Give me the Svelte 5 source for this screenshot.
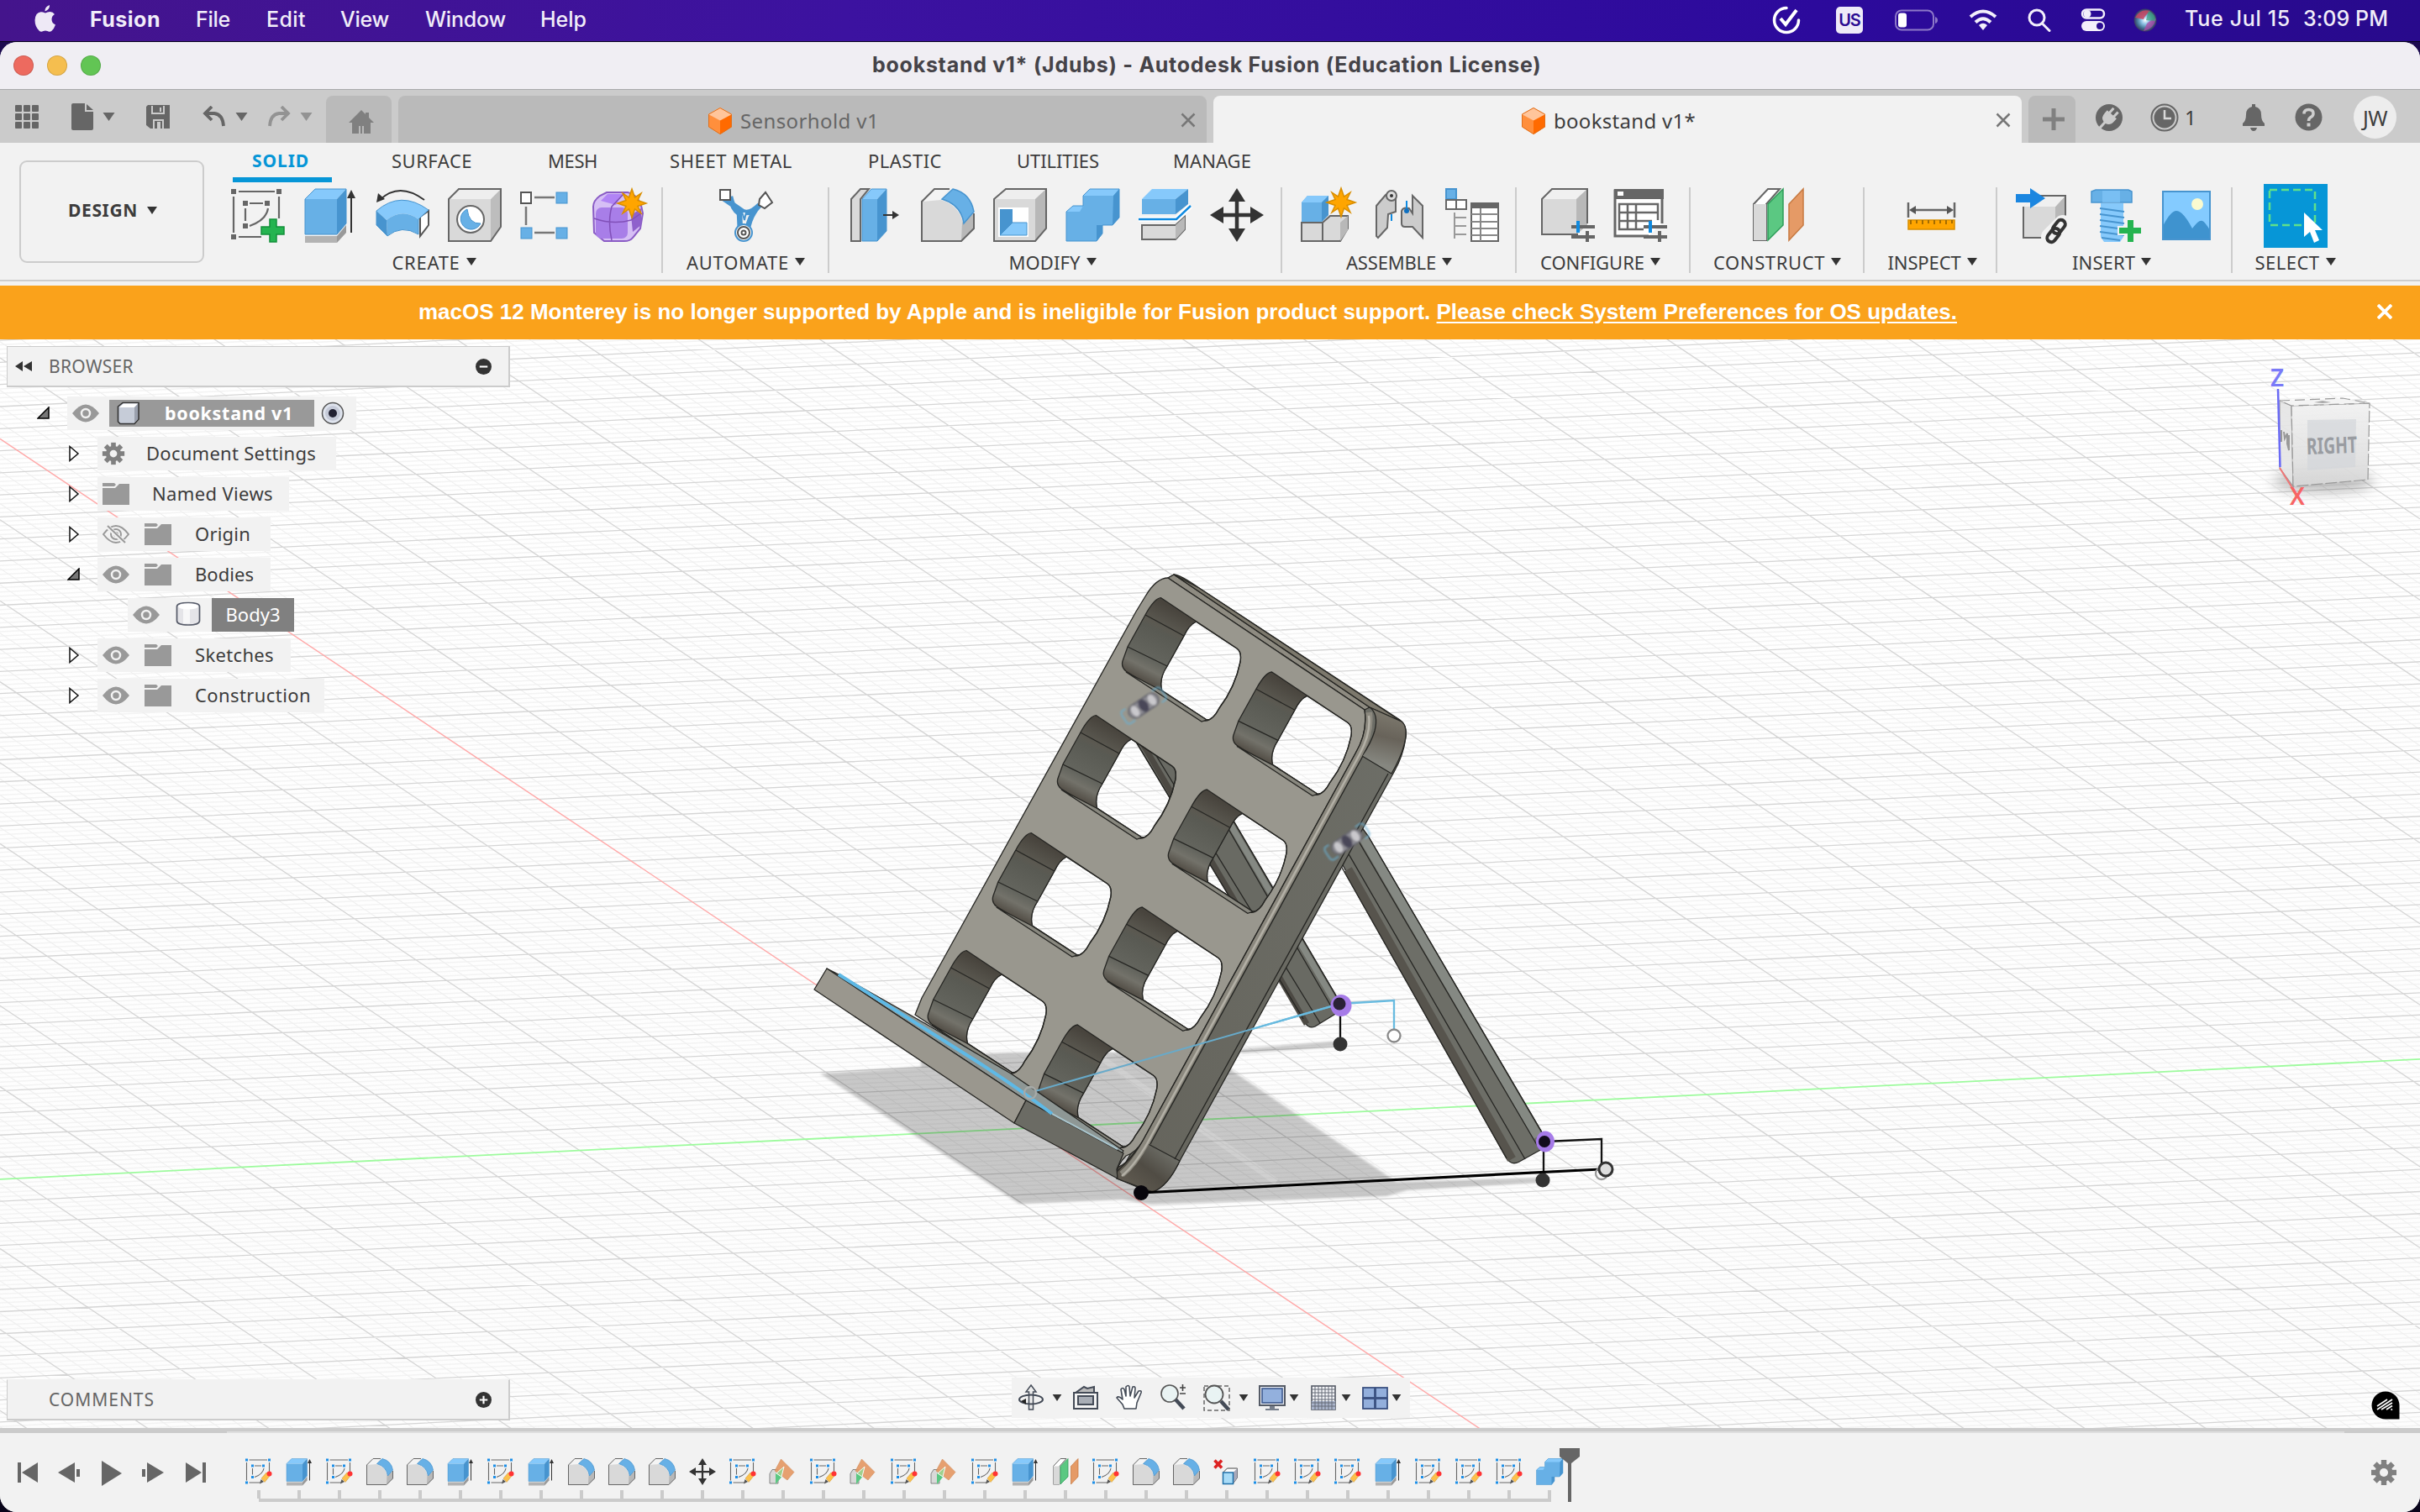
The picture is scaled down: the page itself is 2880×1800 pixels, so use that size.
<script>
  // Spreads letters so that a label fills its design width.
  function fit(node, width) {
    const natural = node.getBoundingClientRect().width;
    const count = node.textContent.trim().length;
    node.style.letterSpacing = `${(width - natural) / count}px`;
  }

  const menus = [
    { text: 'Fusion', w: 84, cell: 126, bold: true },
    { text: 'File', w: 41, cell: 84 },
    { text: 'Edit', w: 47, cell: 88 },
    { text: 'View', w: 58, cell: 101 },
    { text: 'Window', w: 96, cell: 137 },
    { text: 'Help', w: 55, cell: 80 }
  ];

  const ribbonTabs = [
    { text: 'SOLID', w: 68, cell: 166, active: true },
    { text: 'SURFACE', w: 96, cell: 186 },
    { text: 'MESH', w: 59, cell: 145 },
    { text: 'SHEET METAL', w: 146, cell: 236 },
    { text: 'PLASTIC', w: 88, cell: 177 },
    { text: 'UTILITIES', w: 98, cell: 186 },
    { text: 'MANAGE', w: 93, cell: 100 }
  ];

  const groups = [
    { text: 'CREATE', w: 81, size: 532, icons: ['sketch', 'extrude', 'revolve', 'hole', 'pattern', 'form'] },
    { text: 'AUTOMATE', w: 122, size: 198, icons: ['automate'] },
    { text: 'MODIFY', w: 85, size: 539, tight: true, icons: ['press', 'fillet', 'shell', 'combine', 'split', 'move'] },
    { text: 'ASSEMBLE', w: 107, size: 279, icons: ['component', 'joint', 'bom'] },
    { text: 'CONFIGURE', w: 124, size: 207, tight: true, icons: ['config', 'configTable'] },
    { text: 'CONSTRUCT', w: 133, size: 207, icons: ['construct'] },
    { text: 'INSPECT', w: 87, size: 158, wide: true, icons: ['inspect'] },
    { text: 'INSERT', w: 75, size: 280, tight: true, icons: ['insert', 'bolt', 'picture'] },
    { text: 'SELECT', w: 77, size: 150, icons: ['select'] }
  ];

  const tree = [
    { text: 'bookstand v1', w: 153, width: 344, indent: 80, open: true, root: true },
    { text: 'Document Settings', w: 202, width: 284, indent: 116, icon: 'gear', gap: 25 },
    { text: 'Named Views', w: 144, width: 228, indent: 116, icon: 'folder', gap: 27 },
    { text: 'Origin', w: 66, width: 206, indent: 116, eye: 'off', icon: 'folder', gap: 28 },
    { text: 'Bodies', w: 70, width: 206, indent: 116, open: true, eye: 'on', icon: 'folder', gap: 28 },
    { text: 'Body3', w: 65, width: 198, indent: 152, leaf: true, eye: 'on', icon: 'cylinder', picked: true },
    { text: 'Sketches', w: 94, width: 230, indent: 116, eye: 'on', icon: 'folder', gap: 28 },
    { text: 'Construction', w: 138, width: 270, indent: 116, eye: 'on', icon: 'folder', gap: 28 }
  ];

  const S = 'sketchEdit', E = 'extrude', F = 'fillet', P = 'plane';
  const timeline = [S, E, S, F, F, E, S, E, F, F, F, 'move', S, P, S, P, S, P, S, E, 'construct', S, F, F,
    'remove', S, S, S, E, S, S, S, 'combine'];

  // Ground grid: two families of parallel lines.
  const shallow = (y) => `M0 ${y.toFixed(2)}L2880 ${(y - 2880 * 0.04965).toFixed(2)}`;
  const steep = (y) => `M0 ${y.toFixed(2)}L2880 ${(y + 2880 * 0.6691).toFixed(2)}`;
  let major = '', minor = '', minorSteep = '';
  for (let i = -195; i < 100; i++) {
    const y = 1403.8 + i * 5.256;
    if (i === 0) continue;
    if (i % 5 === 0) major += shallow(y); else minor += shallow(y);
  }
  for (let i = -105; i < 64; i++) {
    const y = 522.4 + i * 19.28;
    if (i === 0) continue;
    if (i % 5 === 0) major += steep(y); else minorSteep += steep(y);
  }

  // Window cut-outs of the stand: four rows, two columns.
  const outline = [['M', 1381.7, 711.7], ['L', 1472, 772], ['Q', 1478, 776, 1476, 788], ['Q', 1470, 818, 1451, 843],
    ['Q', 1441, 862, 1430, 857], ['L', 1340, 799], ['Q', 1334, 794, 1336, 787], ['L', 1342, 770], ['L', 1363, 732], ['Q', 1374, 712, 1381.7, 711.7]];
  const opening = [['M', 1423.5, 740], ['L', 1472, 772], ['Q', 1478, 776, 1476, 788], ['Q', 1470, 818, 1451, 843],
    ['Q', 1444, 857, 1436, 857], ['L', 1382.7, 822], ['Q', 1379, 808, 1389, 793], ['L', 1409, 757], ['Q', 1415, 744, 1423.5, 740]];
  const shift = (shape, dx, dy) =>
    shape.map(([c, ...p]) => c + p.map((v, i) => (v + (i % 2 ? dy : dx)).toFixed(1)).join(' ')).join('') + 'Z';
  const holes = [];
  for (let r = 0; r < 4; r++) for (let c = 0; c < 2; c++) holes.push([c * 131.9 - r * 77.1, c * 88.3 + r * 140]);
  const openings = holes.map(([x, y]) => shift(opening, x, y)).join('');
  const wall = shift(outline, 0, 0) + shift(opening, 0, 0);
  const face = 'M1390 688Q1376 688 1363 710L1352 728L1097 1188L1089 1208L1333 1368L1329 1400Q1328 1388 1340 1376Q1352 1372 1360 1358L1613 897Q1628 872 1624 845Z' + openings;
</script>

{#snippet caret()}
  <svg class="caret" viewBox="0 0 12 9"><path d="M0 0H12L6 9Z" fill="currentColor" /></svg>
{/snippet}

{#snippet star(x, y)}
  <path transform="translate({x} {y})" d="M0-17L3.500-7L11-12L7-3.500L17 0L7 3.500L11 12L3.500 7L0 17L-3.500 7L-11 12L-7 3.500L-17 0L-7-3.500L-11-12L-3.500-7Z" fill="#ffa500" stroke="#d98e00" stroke-width="1.500" />
{/snippet}

{#snippet gear()}
  <svg class="gear" viewBox="-16 -16 32 32">
    {#each [0, 45, 90, 135] as a}<rect x="-3.200" y="-15" width="6.400" height="30" transform="rotate({a})" fill="#808080" />{/each}
    <circle r="10.500" fill="#808080" /><circle r="5" fill="#f2f2f2" />
  </svg>
{/snippet}

{#snippet orangeCube()}
  <svg class="cube" viewBox="0 0 28 32">
    <path d="M14 0L28 8V23L14 32L0 23V8Z" fill="#ff8f3c" /><path d="M14 15L28 8V23L14 32Z" fill="#ff6a00" />
    <path d="M14 0L28 8L14 15.500L0 8Z" fill="#ffc59b" /><path d="M14 .5L27.500 8V23L14 31.500L.5 23V8Z" fill="none" stroke="#e0701c" />
  </svg>
{/snippet}

{#snippet icon(name)}
  <svg class="icon" viewBox="0 0 64 64">
    {#if name === 'sketch' || name === 'sketchEdit'}
      {@const edit = name === 'sketchEdit'}
      <g stroke="#666" stroke-width="2.200" fill="none">
        <path d="M9 4H52M3 10V53M57 10V36M9 58H36M22 18H38M17 24V39M44 24Q42 38 22 45" />
      </g>
      <g fill={edit ? '#1c8fe8' : '#666'}>
        <rect y="1" width="6" height="6" /><rect x="54" y="1" width="6" height="6" /><rect y="55" width="6" height="6" />
        <rect x="14" y="15" width="6" height="6" /><rect x="40" y="15" width="6" height="6" /><rect x="14" y="42" width="6" height="6" />
      </g>
      {#if edit}
        <path d="M34 61L37 50L44 56Z" fill="#555" /><path d="M38 48L50 34L58 42L46 57Z" fill="#fcc04b" stroke="#c99430" /><circle cx="57" cy="37" r="6" fill="#f33" />
      {:else}
        <path d="M46 37H54V46H63V55H54V64H46V55H36V46H46Z" fill="#25b450" stroke="#12903a" stroke-width="1.500" />
      {/if}
    {:else if name === 'extrude'}
      <path d="M2 57H40V65H2Z" fill="#b3b3b3" /><path d="M40 57L51 44V53L40 65Z" fill="#999" />
      <path d="M2 13L14 1H51L40 13Z" fill="#86c9fb" /><path d="M2 13H40V55H2Z" fill="#67b0e6" /><path d="M40 13L51 1V42L40 55Z" fill="#4794cf" />
      <path d="M2 55V13L14 1H51V42L40 55Z" fill="none" stroke="#4794cf" /><path d="M57 10V53" stroke="#333" stroke-width="2" /><path d="M57 2L62 12H52Z" fill="#333" />
    {:else if name === 'revolve'}
      <path d="M5 14Q28-8 58 14" fill="none" stroke="#333" stroke-width="2" /><path d="M1 17L3 6L11 13Z" fill="#333" />
      <path d="M53 34L63 27V44L53 57Z" fill="#fff" stroke="#555" stroke-width="2" />
      <path d="M1 27Q30 2 63 26L51 37Q32 23 13 38Z" fill="#86c9fb" /><path d="M13 38Q32 23 51 37V55Q31 43 14 57Z" fill="#67b0e6" /><path d="M1 27L13 38L14 57L1 44Z" fill="#4794cf" />
      <path d="M1 27Q30 2 63 26L51 37V55Q31 43 14 57L1 44Z" fill="none" stroke="#4794cf" />
    {:else if name === 'hole'}
      <path d="M1 13L13 1H63V46L51 63H1Z" fill="#d9d9d9" /><path d="M51 13L63 1V46L51 63Z" fill="#bdbdbd" /><path d="M1 13L13 1H63L51 13Z" fill="#eee" />
      <path d="M1 13L13 1H63V46L51 63H1Z" fill="none" stroke="#666" stroke-width="2" /><circle cx="27" cy="37" r="16" fill="#fff" stroke="#666" stroke-width="2" /><path d="M23 25A12.500 12.500 0 1 0 39 42Q25 43 23 25Z" fill="#67b0e6" stroke="#4794cf" />
    {:else if name === 'pattern'}
      <path d="M17 11H41M7 22V44M17 53H41" stroke="#777" stroke-width="2.500" /><rect x="1" y="5" width="12" height="13" fill="#fff" stroke="#555" stroke-width="2" />
      <g fill="#67b0e6" stroke="#4794cf"><rect x="43" y="5" width="13" height="13" /><rect x="1" y="47" width="13" height="13" /><rect x="43" y="47" width="13" height="13" /></g>
    {:else if name === 'form'}
      <path d="M1 22Q1 15 9 9L17 5H42Q57 8 60 30L57 48L48 59Q45 63 38 63H14L2 53Z" fill="#d6bff5" stroke="#8a5cc5" stroke-width="2" />
      <path d="M10 15L18 7H36L28 20Z" fill="#b184f5" /><rect x="4" y="23" width="38" height="37" rx="7" fill="#a87ee8" /><path d="M46 32L58 24V44L48 52Z" fill="#8f61cc" /><path d="M2 36Q25 44 46 38L58 30M23 62Q18 40 23 22L38 6" fill="none" stroke="#8150b8" stroke-width="1.500" />
      {@render star(47, 18)}
    {:else if name === 'automate'}
      <path d="M5 12L28 28Q36 32 48 20M13 10Q16 25 24 30L25 52M48 20Q36 32 33 52" fill="none" stroke="#4794cf" stroke-width="6.500" /><path d="M27 28L32 28L30 38Z" fill="#fff" stroke="#4794cf" stroke-width="2" />
      <rect x="1" y="2" width="12" height="12" fill="#fff" stroke="#555" stroke-width="2" /><path d="M48 13L55 5L63 17L54 24L47 20Z" fill="#fff" stroke="#555" stroke-width="2" /><circle cx="29" cy="53" r="10" fill="#fff" stroke="#4794cf" stroke-width="2" /><circle cx="29" cy="53" r="7" fill="#fff" stroke="#555" stroke-width="2" /><circle cx="29" cy="53" r="2.500" fill="none" stroke="#555" stroke-width="2" />
    {:else if name === 'press'}
      <path d="M3 13L14 1H24L14 13V63H3Z" fill="#d9d9d9" stroke="#666" stroke-width="2" /><path d="M16 13H34V63H16Z" fill="#67b0e6" /><path d="M16 13L27 1H45L34 13Z" fill="#86c9fb" /><path d="M34 13L45 1V51L34 63Z" fill="#4794cf" /><path d="M16 13L27 1H45V51L34 63H16Z" fill="none" stroke="#4794cf" /><path d="M41 32H54" stroke="#333" stroke-width="2" /><path d="M52 27L60 32L52 37Z" fill="#333" />
    {:else if name === 'fillet'}
      <path d="M1 16L16 1H34L24 14Q44 20 50 40L63 30V48L48 63H1Z" fill="#d9d9d9" /><path d="M49 41L63 30V48L48 63Z" fill="#b8b8b8" /><path d="M2 16L16 2H33L24 14Z" fill="#f4f4f4" /><path d="M1 63V16L16 1H34M63 30V48L48 63H1V16" fill="none" stroke="#666" stroke-width="2" />
      <path d="M25 13L38 1Q59 6 63 28L51 42Q48 20 25 13Z" fill="#67b0e6" stroke="#4794cf" stroke-width="1.500" />
    {:else if name === 'shell'}
      <path d="M1 13L15 1H63V48L50 63H1Z" fill="#d9d9d9" /><path d="M1 13L15 1H63L50 13Z" fill="#eee" /><path d="M50 13L63 1V48L50 63Z" fill="#b8b8b8" /><path d="M1 13L15 1H63V48L50 63H1Z" fill="none" stroke="#666" stroke-width="2" /><path d="M6 23H42V58H6Z" fill="#fff" /><path d="M8 25H23V41L8 56Z" fill="#4794cf" /><path d="M23 41H40V56H8Z" fill="#86c9fb" stroke="#4794cf" />
    {:else if name === 'combine'}
      <path d="M1 28L9 21H21V9L29 1H64V35L56 44H44V54L37 63H1Z" fill="#67b0e6" /><path d="M21 9L29 1H64L57 9ZM1 28L9 21H21L17 28Z" fill="#86c9fb" /><path d="M57 9L64 1V35L56 44ZM37 54V44H44V54L37 63Z" fill="#4794cf" /><path d="M1 28L9 21H21V9L29 1H64V35L56 44H44V54L37 63H1Z" fill="none" stroke="#4794cf" />
    {:else if name === 'split'}
      <path d="M5 44H45L56 34V49L45 61H5Z" fill="#d9d9d9" stroke="#666" stroke-width="2" /><path d="M45 44L56 34V49L45 61Z" fill="#b8b8b8" /><path d="M5 13H45V31H5Z" fill="#67b0e6" /><path d="M5 13L17 1H60L45 13Z" fill="#86c9fb" /><path d="M45 13L60 1V19L45 31Z" fill="#4794cf" /><path d="M1 37H46L63 21" fill="none" stroke="#fff" stroke-width="6" /><path d="M1 37H46L63 21" fill="none" stroke="#0f8ae0" stroke-width="2.500" />
    {:else if name === 'move'}
      <path d="M32 8V56M8 32H56" stroke="#333" stroke-width="4.500" /><path d="M32 0L42 16H22ZM32 64L42 48H22ZM0 32L16 22V42ZM64 32L48 22V42Z" fill="#333" />
    {:else if name === 'component'}
      <path d="M1 41H26V63H1ZM26 41L35 33H56V48L47 63H26Z" fill="#d9d9d9" stroke="#666" stroke-width="2" /><path d="M47 41L56 33V50L47 63Z" fill="#b8b8b8" /><path d="M1 17L8 9H33V32L25 40H1Z" fill="#67b0e6" /><path d="M1 17L8 9H33L25 17Z" fill="#86c9fb" /><path d="M25 17L33 9V32L25 40Z" fill="#4794cf" />
      {@render star(48, 17)}
    {:else if name === 'joint'}
      <path d="M4 21L15 8Q22 2 27 9V28L18 31L17 47L6 59L4 57Z" fill="#ccc" stroke="#666" stroke-width="2" /><circle cx="22" cy="9" r="6" fill="#ddd" stroke="#666" stroke-width="2" /><circle cx="22" cy="9" r="2" fill="#333" /><path d="M22 31V39" stroke="#0f8ae0" stroke-width="2" />
      <path d="M47 9L59 21V59L47 46H38Q34 46 34 42V27Q36 22 43 24L47 30Z" fill="#ccc" stroke="#666" stroke-width="2" /><path d="M40 15V28" stroke="#0f8ae0" stroke-width="2" /><circle cx="40" cy="27" r="3" fill="#0f70c0" />
    {:else if name === 'bom'}
      <path d="M1 1H13V13H1Z" fill="#67b0e6" stroke="#4794cf" stroke-width="2" /><path d="M1 14H25V25H1ZM13 14V25" fill="#fff" stroke="#666" stroke-width="2" /><path d="M11 29V60M11 35H25M11 45H25M11 55H25" stroke="#999" stroke-width="2" /><rect x="31" y="18" width="32" height="45" fill="#fff" stroke="#666" stroke-width="2" /><path d="M30 17H64V24H30Z" fill="#666" /><path d="M31 31H63M31 40H63M31 48H63M31 56H63M42 24V63" stroke="#888" stroke-width="2" />
    {:else if name === 'config'}
      <path d="M1 13L13 1H55V44L42 55H1Z" fill="#d9d9d9" /><path d="M1 13L13 1H55L42 13Z" fill="#f0f0f0" /><path d="M42 13L55 1V44L42 55Z" fill="#b8b8b8" /><path d="M44 55H1V13L13 1H55V42" fill="none" stroke="#666" stroke-width="2" /><path d="M36 46H64M36 58H64" stroke="#666" stroke-width="4" /><path d="M44 39V53" stroke="#0f8ae0" stroke-width="4" /><path d="M55 51V64" stroke="#666" stroke-width="4" />
    {:else if name === 'configTable'}
      <path d="M42 57H2V3H58V42" fill="#fff" stroke="#666" stroke-width="3" /><path d="M1 1H60V13H1Z" fill="#666" /><rect x="5" y="4" width="7" height="5" fill="#fff" /><path d="M36 49H7V19H53V38M7 29H53M7 39H46M17 19V49M27 19V49" fill="none" stroke="#666" stroke-width="2.500" /><path d="M36 46H64M36 58H64" stroke="#666" stroke-width="4" /><path d="M44 39V53" stroke="#0f8ae0" stroke-width="4" /><path d="M55 51V64" stroke="#666" stroke-width="4" />
    {:else if name === 'construct'}
      <path d="M3 19L20 1H34L18 19V62H3Z" fill="#fff" stroke="#666" stroke-width="2" /><path d="M3 19H18V62H3Z" fill="#d9d9d9" /><path d="M20 19L38 1V44L20 62Z" fill="#5bc882" stroke="#2d9c58" stroke-width="1.500" /><path d="M45 19L62 1V44L45 62Z" fill="#e59a66" stroke="#c77a42" stroke-width="1.500" />
    {:else if name === 'inspect'}
      <path d="M5 17V35M60 17V35M10 26H55" stroke="#666" stroke-width="2.500" /><path d="M6 26L14 21V31ZM59 26L51 21V31Z" fill="#555" /><rect x="5" y="38" width="55" height="11" fill="#ffa500" stroke="#d98e00" stroke-width="1.500" /><path d="M8 38V43M15 38V42M22 38V43M29 38V42M36 38V43M43 38V42M50 38V43M57 38V42" stroke="#875a00" stroke-width="1.500" />
    {:else if name === 'insert'}
      <path d="M9 22L22 9H59L47 22V59H9Z" fill="#d9d9d9" /><path d="M47 22L59 9V48L47 59Z" fill="#b8b8b8" /><path d="M9 22L22 9H59L47 22Z" fill="#f0f0f0" /><path d="M32 59H9V22M22 9H59V34" fill="none" stroke="#666" stroke-width="2" /><path d="M0 7H17V0L35 12L17 24V17H0Z" fill="#1b86e0" />
      <path d="M41 58L56 43" fill="none" stroke="#f2f2f2" stroke-width="22" stroke-linecap="round" />
      <g transform="rotate(38 48 51)" fill="none" stroke="#333" stroke-width="4"><rect x="42.500" y="36" width="10" height="18" rx="5" /><rect x="43.500" y="48" width="10" height="18" rx="5" /></g>
    {:else if name === 'bolt'}
      <path d="M15 18H42V58L38 64H19L15 58Z" fill="#86c9fb" /><path d="M14 24L43 28M14 31L43 35M14 38L43 42M14 45L43 49M14 52L43 56M16 59L38 62" stroke="#4794cf" stroke-width="2" /><path d="M4 4L9 2H48L52 4V17H4Z" fill="#67b0e6" stroke="#4794cf" stroke-width="1.500" /><path d="M17 3H38V17H17Z" fill="#86c9fb" opacity=".6" /><path d="M46 37H55V46H64V55H55V65H46V55H36V46H46Z" fill="#25b450" stroke="#f2f2f2" stroke-width="2" />
    {:else if name === 'picture'}
      <rect x="2" y="4" width="57" height="57" fill="#84cbff" /><circle cx="44" cy="19" r="7" fill="#fbfbd0" /><path d="M2 47Q12 27 19 27Q27 27 38 48Q46 37 50 39Q53 40 59 50V61H2Z" fill="#3f93cf" /><rect x="3" y="4" width="56" height="57" fill="none" stroke="#4794cf" stroke-width="2" />
    {:else if name === 'select'}
      <path d="M-6-5H70V71H-6Z" fill="#0696d7" /><rect x="1" y="2" width="54" height="42" fill="none" stroke="#5fe08a" stroke-width="2.500" stroke-dasharray="9 5" /><path d="M42 29V58L49 52L54 65L60 62L55 50H64Z" fill="#fff" />
    {:else if name === 'plane'}
      <path d="M0 37L6 27H20V60H0Z" fill="#d9d9d9" stroke="#666" stroke-width="1.500" /><path d="M14 62L32 40V18L14 37Z" fill="#5bc882" /><path d="M27 2L58 33L42 52L12 30Z" fill="#e59a66" stroke="#c77a42" opacity=".92" /><path d="M16 36L34 20L28 44Z" fill="#9fd08c" stroke="#fff" stroke-width="2" />
    {:else if name === 'remove'}
      <path d="M3 5L20 23M20 5L3 23" stroke="#d22" stroke-width="7" /><path d="M23 34L33 24H57V46L47 60H23Z" fill="#fff" stroke="#444" stroke-width="2" /><path d="M47 34L57 24V46L47 60Z" fill="#aab" /><rect x="23" y="34" width="24" height="27" fill="#a9dcf7" stroke="#1f6fa8" stroke-width="3" />
    {/if}
  </svg>
{/snippet}

<div class="screen">
  <header class="menubar">
    <svg class="apple" viewBox="0 0 26 32"><path d="M18.500 0Q19 5 13 7.500Q12.500 2.500 18.500 0ZM13.500 9.500Q16 8 19 8Q22.500 8.200 24.500 11Q21 13 21 17Q21 21.500 25.500 23.500Q24 28 21 30.800Q18.500 32.500 16 31Q13.500 30 11 31Q8.500 32.500 6.500 31Q1 26 1 18Q1.500 9 8 8.200Q10 8 13.500 9.500Z" fill="#eee9f6" /></svg>
    <nav>
      {#each menus as m}
        <span class="menu" style:width="{m.cell}px"><b class:strong={m.bold} use:fit={m.w}>{m.text}</b></span>
      {/each}
    </nav>
    <div class="status">
      <svg width="34" height="34" viewBox="0 0 34 34" fill="none" stroke="#fff" stroke-width="3.500"><path d="M17 2.500A14.500 14.500 0 1 0 31.500 17" stroke-linecap="round" /><path d="M10 15L16 22L29 5" stroke-width="4" /></svg>
      <span class="badge">US</span>
      <svg width="52" height="26" viewBox="0 0 52 26"><rect x="1" y="1.500" width="45" height="23" rx="7" fill="none" stroke="#8d79c8" stroke-width="2" /><rect x="4" y="4.500" width="10" height="17" rx="3" fill="#fff" /><path d="M48 9Q51 10 51 13Q51 16 48 17Z" fill="#8d79c8" /></svg>
      <svg class="wifi" width="34" height="26" viewBox="0 0 34 26" fill="none" stroke="#f3effb" stroke-width="4"><path d="M2 9Q17-4 32 9" /><path d="M8 15.500Q17 7 26 15.500" /><path d="M17 25L12 19Q17 14.500 22 19Z" fill="#f3effb" stroke="none" /></svg>
      <svg class="find" width="28" height="28" viewBox="0 0 28 28" fill="none" stroke="#f3effb" stroke-width="3"><circle cx="11" cy="11" r="9" /><path d="M17.500 18L26 26.500" stroke-linecap="round" /></svg>
      <svg class="toggles" width="30" height="28" viewBox="0 0 30 28"><rect x="2" y="1.500" width="26" height="10" rx="5" fill="none" stroke="#f3effb" stroke-width="2.500" /><circle cx="8" cy="6.500" r="4.500" fill="#f3effb" /><rect x="1" y="15" width="28" height="12" rx="6" fill="#f3effb" /><circle cx="23" cy="21" r="4" fill="#2b0b92" /></svg>
      <svg class="siri" width="28" height="28" viewBox="0 0 28 28"><defs><radialGradient id="siri"><stop offset="0" stop-color="#fff" /><stop offset=".35" stop-color="#8fc3e6" /><stop offset=".75" stop-color="#41708f" /><stop offset="1" stop-color="#3a3560" /></radialGradient></defs><circle cx="14" cy="14" r="13.500" fill="url(#siri)" /><path d="M2 11Q8 0 20 3Q14 8 12 13Z" fill="#c8435f" opacity=".85" /><path d="M12 27Q24 25 27 12Q20 14 16 18Z" fill="#b04aa8" opacity=".75" /><path d="M18 3Q27 7 26 15L15 14Z" fill="#3ea37d" opacity=".7" /></svg>
      <span class="clock"><b use:fit={126}>Tue Jul 15</b><b use:fit={101}>3:09 PM</b></span>
    </div>
  </header>

  <main class="window">
    <div class="titlebar">
      <div class="lights"><i class="red"></i><i class="amber"></i><i class="green"></i></div>
      <h1><span use:fit={796}>bookstand v1* (Jdubs) - Autodesk Fusion (Education License)</span></h1>
    </div>

    <div class="tabbar">
      <div class="quick">
        <svg width="28" height="28" viewBox="0 0 28 28" fill="#666">{#each [0, 10, 20] as x}{#each [0, 10, 20] as y}<rect {x} {y} width="8" height="8" rx="1" />{/each}{/each}</svg>
        <span class="pair"><svg width="26" height="32" viewBox="0 0 26 32" fill="#666"><path d="M2 0H16V10H26V30Q26 32 24 32H2Q0 32 0 30V2Q0 0 2 0ZM18 1L26 8H18Z" /></svg><svg class="down" viewBox="0 0 14 10"><path d="M0 0H14L7 10Z" /></svg></span>
        <svg class="save" width="28" height="28" viewBox="0 0 28 28"><path d="M2 0H28V28H5L0 24V2Z" fill="#666" /><path d="M7 1V10H21V1M9 28V18H20V28M17 3V8" fill="none" stroke="#cbcbcb" stroke-width="2" /><path d="M13 20H17V28H13Z" fill="#cbcbcb" /></svg>
        <span class="pair undo"><svg width="28" height="26" viewBox="0 0 28 26" fill="none" stroke="#666" stroke-width="3.800"><path d="M11 1L3 9L11 17M3 9H14Q24 10 25 24" /></svg><svg class="down" viewBox="0 0 14 10"><path d="M0 0H14L7 10Z" /></svg></span>
        <span class="pair redo"><svg width="28" height="26" viewBox="0 0 28 26" fill="none" stroke="#666" stroke-width="3.800"><path d="M17 1L25 9L17 17M25 9H14Q4 10 3 24" /></svg><svg class="down" viewBox="0 0 14 10"><path d="M0 0H14L7 10Z" /></svg></span>
      </div>
      <div class="tab home"><svg width="30" height="28" viewBox="0 0 30 28" fill="#808080"><path d="M15 0L20 5V3H24V9L30 15H26V28H18V19H16V28H14V19H12V28H4V15H0Z" /></svg></div>
      <div class="tab doc">{@render orangeCube()}<span class="name"><b use:fit={165}>Sensorhold v1</b></span><svg class="close" viewBox="0 0 18 18"><path d="M1.500 1.500L16.500 16.500M16.500 1.500L1.500 16.500" /></svg></div>
      <div class="tab doc active">{@render orangeCube()}<span class="name"><b use:fit={169}>bookstand v1*</b></span><svg class="close" viewBox="0 0 18 18"><path d="M1.500 1.500L16.500 16.500M16.500 1.500L1.500 16.500" /></svg></div>
      <div class="tab plus"><svg width="26" height="26" viewBox="0 0 26 26"><path d="M13 0V26M0 13H26" stroke="#808080" stroke-width="5" /></svg></div>
      <div class="tools">
        <svg width="32" height="32" viewBox="0 0 32 32"><circle cx="16" cy="16" r="16" fill="#666" /><g transform="rotate(42 16 16)" fill="#cbcbcb"><path d="M11 4H14V12H11ZM18 4H21V12H18Z" /><path d="M8.500 11H23.500V15Q23.500 23 17.500 24V34H14.500V24Q8.500 23 8.500 15Z" /></g></svg>
        <span class="jobs"><svg width="34" height="34" viewBox="0 0 34 34"><circle cx="17" cy="17" r="15.500" fill="none" stroke="#666" stroke-width="2" /><circle cx="17" cy="17" r="12.500" fill="#666" /><path d="M17 8V18H25" fill="none" stroke="#d8d8d8" stroke-width="2.500" /></svg>1</span>
        <svg class="bell" width="28" height="32" viewBox="0 0 28 32" fill="#666"><path d="M12 0H16V3Q23 5 23 12Q23 20 27 23V26H1V23Q5 20 5 12Q5 5 12 3ZM10 28H18Q17 32 14 32Q11 32 10 28Z" /></svg>
        <span class="help"><svg width="33" height="33" viewBox="0 0 33 33"><circle cx="16.500" cy="16.500" r="16" fill="#666" /><path d="M11 12.500Q11 7.500 16.500 7.500Q22 7.500 22 12Q22 15 19 16.500Q16.500 18 16.500 21" fill="none" stroke="#cfcfcf" stroke-width="3.500" /><rect x="14.500" y="23.500" width="4" height="4" fill="#cfcfcf" /></svg></span>
        <span class="avatar">JW</span>
      </div>
    </div>

    <section class="ribbon">
      <div class="workspace"><span class="wtext"><b use:fit={83}>DESIGN</b></span>{@render caret()}</div>
      <div class="panels">
        <div class="rtabs">
          {#each ribbonTabs as t}
            <span class="rtab" class:on={t.active} style:width="{t.cell}px"><b use:fit={t.w}>{t.text}</b></span>
          {/each}
        </div>
        <div class="groups">
          {#each groups as g}
            <div class="group" style:width="{g.size}px">
              <div class="icons">{#each g.icons as name}{@render icon(name)}{/each}</div>
              <div class="glabel" class:tight={g.tight} class:wide={g.wide}><b use:fit={g.w}>{g.text}</b>{@render caret()}</div>
            </div>
          {/each}
        </div>
      </div>
    </section>

    <div class="banner">
      <p><span use:fit={1831}>macOS 12 Monterey is no longer supported by Apple and is ineligible for Fusion product support. <u>Please check System Preferences for OS updates.</u></span></p>
      <svg viewBox="0 0 18 18"><path d="M1 1L17 17M17 1L1 17" stroke="#fff" stroke-width="3.800" /></svg>
    </div>

    <section class="canvas">
      <svg class="scene" viewBox="0 404 2880 1296">
        <defs>
          <linearGradient id="side" x1="0" x2="1"><stop offset="0" stop-color="#65645c" /><stop offset="1" stop-color="#6d6e67" /></linearGradient>
          <linearGradient id="wallG" gradientUnits="userSpaceOnUse" x1="1385" y1="718" x2="1335" y2="815">
            <stop offset="0" stop-color="#48443d" /><stop offset=".24" stop-color="#5b5951" /><stop offset=".3" stop-color="#595a53" /><stop offset=".62" stop-color="#64655e" /><stop offset=".72" stop-color="#73726a" /><stop offset=".86" stop-color="#524d45" /><stop offset="1" stop-color="#69655c" />
          </linearGradient>
          <linearGradient id="corner" gradientUnits="userSpaceOnUse" x1="1650" y1="850" x2="1636" y2="908"><stop offset="0" stop-color="#7b776c" /><stop offset=".45" stop-color="#68635a" /><stop offset="1" stop-color="#868780" /></linearGradient>
          <linearGradient id="foot" gradientUnits="userSpaceOnUse" x1="1385" y1="1370" x2="1350" y2="1415"><stop offset="0" stop-color="#6b6b64" /><stop offset=".5" stop-color="#504c44" /><stop offset="1" stop-color="#5f5a50" /></linearGradient>
          <linearGradient id="cubeG" x2="0" y2="1"><stop offset="0" stop-color="#f1f1f1" /><stop offset="1" stop-color="#d8d8d8" /></linearGradient>
          <linearGradient id="ground" x2="0" y2="1"><stop offset="0" stop-color="#fff" /><stop offset="1" stop-color="#fdfdfd" /></linearGradient>
          <filter id="soft" x="-20%" y="-50%" width="140%" height="200%"><feGaussianBlur stdDeviation="8" /></filter>
          <filter id="edge"><feGaussianBlur stdDeviation="1.500" /></filter>
          <filter id="haze"><feGaussianBlur stdDeviation="1" /></filter>
        </defs>
        <rect y="404" width="2880" height="1296" fill="url(#ground)" />
        <path d={minor} stroke="#f3f3f3" stroke-width="1.500" /><path d={minorSteep} stroke="#efefef" stroke-width="1.100" /><path d={major} stroke="#d5d5d5" stroke-width="1.300" />
        <path d={steep(522.4)} stroke="#ffa8a8" stroke-width="1.400" /><path d={shallow(1403.8)} stroke="#9dfa9d" stroke-width="1.800" />

        <g fill="#000" fill-opacity=".21" filter="url(#edge)">
          <path d="M976 1278L1096 1270V1257L1200 1253L1450 1253L1467 1275L1662 1407L1841 1402L1844 1407L1675 1417L1650 1424L1370 1434L1335 1428L1213 1433Z" />
          <path d="M1473 1249L1586 1240L1590 1246L1478 1254Z" />
        </g>
        <path d="M1311 1260L1519 1407" stroke="#fff" stroke-opacity=".16" stroke-width="8" />

        <g stroke="#262623" stroke-width="1.300" stroke-linejoin="round">
          <path d="M1350 880H1411L1591 1187V1206L1565 1222Q1556 1226 1551 1213Z" fill="#696a63" />
          <path d="M1359 884L1555 1219" stroke="#4c4943" stroke-width="7" /><path d="M1407 884L1587 1190" stroke="#858983" stroke-width="7" /><path d="M1350 880L1551 1213M1364 880L1571 1218M1400 880L1587 1203M1411 880L1591 1187" fill="none" />
          <path d="M1598 1030L1617 980L1628 995L1835 1348V1368L1808 1383Q1799 1388 1793 1379Z" fill="#6d6e67" />
          <path d="M1604 1035L1799 1380" stroke="#57544d" stroke-width="11" /><path d="M1623 998L1830 1353" stroke="#858983" stroke-width="11" />
          <path d="M1596 1031L1793 1379M1600 1008L1815 1380M1616 1000L1832 1368M1628 995L1835 1348" fill="none" />
        </g>

        <g stroke="#262623" stroke-width="1.300" stroke-linejoin="round">
          <path d="M1397 684Q1404 684 1427 700L1666 857Q1675 864 1673 878Q1670 900 1659 919L1404 1382Q1390 1412 1372 1419L1363 1417L1329 1403L1613 897L1624 845L1390 688Z" fill="url(#side)" />
          <path d="M1390 688L1397 684L1630 842L1624 845Z" fill="#8e8b81" /><path d="M1397 684L1427 700L1668 859L1630 842Z" fill="#7c786c" />
          <path d="M1630 842Q1641 850 1636 870Q1632 884 1621 900L1656 921Q1671 895 1673 876Q1674 863 1668 859Z" fill="url(#corner)" />
          <path d="M1359 1358L1404 1382Q1390 1412 1372 1419L1329 1403V1390Q1344 1385 1359 1358Z" fill="url(#foot)" />
          <path d={face} fill="#99978e" fill-rule="evenodd" />
          <path d="M1629 848Q1632 872 1618 897L1364 1360Q1350 1386 1335 1398" fill="none" stroke="#8b887e" stroke-width="8" />
          <path d="M1629 852Q1632 872 1618 898L1366 1360Q1350 1388 1335 1400" fill="none" stroke="#b3b0a6" stroke-width="2.500" />
          <path d="M1613 897Q1628 872 1624 845M1613 897L1360 1358Q1352 1372 1340 1384L1329 1395M1622 900L1369 1362M1652 921L1398 1380" fill="none" />
        </g>

        {#each holes as [x, y]}
          <g transform="translate({x} {y})" stroke="#262623" stroke-width="1.300">
            <path d={wall} fill="url(#wallG)" fill-rule="evenodd" /><path d="M1340 800L1382 822L1436 857L1430 859Z" fill="#89887f" />
            <path d="M1363 732L1409 757M1342 770L1389 793" fill="none" />
          </g>
        {/each}

        <g stroke="#262623" stroke-width="1.300" stroke-linejoin="round">
          <path d="M984 1153L998 1160L1102 1219L1203 1278L1337 1370L1333 1376L1221 1310Z" fill="#8e9795" />
          <path d="M984 1153L969 1178L1207 1337L1221 1310Z" fill="#9a978e" />
          <path d="M1221 1310L1207 1337L1330 1403L1329 1392L1337 1373Z" fill="#6b6b64" />
        </g>
        <path d="M998 1160L1160 1262Q1210 1294 1252 1326" fill="none" stroke="#5eb9e6" stroke-width="4" /><path d="M1252 1326L1330 1368" stroke="#a9c4cc" stroke-width="2" />

        {#each [[1361, 840], [1603, 1002]] as [x, y]}
          <g transform="translate({x} {y}) rotate(-34)" filter="url(#haze)">
            <path d="M-20-9H-24Q-28-9-28-4V4Q-28 9-24 9H-18M18-9H24Q28-9 28-4V4Q28 9 24 9H20" fill="none" stroke="#6ab0d2" stroke-width="1.500" />
            <rect x="-20" y="-8" width="40" height="16" rx="8" fill="#8f8e95" stroke="#66666e" stroke-width="1.800" />
            <ellipse cx="-12" rx="5" ry="7.500" fill="#c9c8cc" stroke="#77777d" /><ellipse cx="12" rx="5" ry="7.500" fill="#c9c8cc" stroke="#77777d" />
            <ellipse rx="5.500" ry="8" fill="#494659" />
          </g>
        {/each}

        <g fill="none" stroke-width="2.300">
          <path d="M1232 1299L1595 1195" stroke="#67aaca" stroke-width="2" /><path d="M1490 1225L1595 1195L1659 1191V1225" stroke="#68bbe0" />
          <circle cx="1226" cy="1301" r="7" stroke="#a6aaa8" /><circle cx="1659" cy="1233" r="7.500" stroke="#888" fill="#fff" />
          <path d="M1595 1200V1243M1837 1360V1405M1839 1359L1906 1356V1390" stroke="#111" /><path d="M1358 1420L1904 1392" stroke="#000" stroke-width="3.200" />
          <circle cx="1906" cy="1397" r="7" stroke="#999" /><circle cx="1911" cy="1392" r="8" stroke="#333" stroke-width="3" fill="#ddd" />
          <g stroke="none"><circle cx="1595" cy="1243" r="8.500" fill="#333" /><circle cx="1836" cy="1405" r="8.500" fill="#333" /><circle cx="1358" cy="1420" r="9" fill="#08060c" />
            <ellipse cx="1596" cy="1197" rx="12.500" ry="13" fill="#a67be8" /><circle cx="1594" cy="1195" r="7.500" fill="#2a2136" /><ellipse cx="1839" cy="1359" rx="11" ry="12.500" fill="#a67be8" /><circle cx="1838" cy="1359" r="7" fill="#120c1c" /></g>
        </g>

        <ellipse cx="2765" cy="573" rx="60" ry="13" fill="#000" opacity=".26" filter="url(#soft)" />
        <g stroke="#999" stroke-width="1.200">
          <path d="M2713 477L2727 483L2729 579L2713 557Z" fill="#e4e4e4" fill-opacity=".9" /><path d="M2727 483L2820 480L2818 571L2729 579Z" fill="url(#cubeG)" fill-opacity=".92" stroke-dasharray="14 3" /><path d="M2713 477L2788 474L2820 480L2727 483Z" fill="#f4f4f4" stroke-dasharray="12 6" />
        </g>
        <path d="M2746 500L2804 499L2803 556L2746 560Z" fill="#d3d6da" opacity=".7" /><path d="M2754 479L2764 477L2774 479L2764 480Z" fill="#aaa" />
        <text x="2745" y="540" class="facing" textLength="60" lengthAdjust="spacingAndGlyphs" transform="rotate(-2 2775 530)">RIGHT</text>
        <path d="M2715 512V526M2718 514L2719 522L2722 516V529M2722 528L2724 536V518" fill="none" stroke="#999" stroke-width="2" />
        <path d="M2711 463L2713.500 556" stroke="#6a6af5" stroke-width="2.500" /><path d="M2713 557L2730 584" stroke="#f07575" stroke-width="2" />
        <text x="2702" y="460" class="axis z">Z</text><text x="2725" y="601" class="axis x">X</text>
      </svg>

      <aside class="browser">
        <div class="panelhead">
          <svg width="20" height="14" viewBox="0 0 20 14"><path d="M9 1V13L0 7ZM20 1V13L10 7Z" fill="#333" /></svg>
          <span><b use:fit={101}>BROWSER</b></span>
          <svg class="dot" viewBox="0 0 18 18"><circle cx="9" cy="9" r="9" fill="#333" /><path d="M4.500 9H13.500" stroke="#fff" stroke-width="2" /></svg>
        </div>
        <ul>
          {#each tree as n}
            <li style:padding-left="{n.indent - 36}px">
              <span class="twist">
                {#if n.leaf}{:else if n.open}<svg width="16" height="16" viewBox="0 0 16 16"><path d="M14 1V14H1Z" fill="#777" stroke="#000" stroke-width="1.500" /></svg>{:else}<svg class="shut" width="14" height="20" viewBox="0 0 14 20"><path d="M2 1.500L12 10L2 18.500Z" fill="#fff" stroke="#111" stroke-width="1.500" /></svg>{/if}
              </span>
              <div class="node" style:width="{n.width}px">
                {#if n.eye || n.root}
                  <svg class="eye" viewBox="0 0 32 22">
                    {#if n.eye === 'off'}
                      <g fill="none" stroke="#999" stroke-width="2"><path d="M1 11Q16-9 31 11Q16 31 1 11Z" /><circle cx="16" cy="11" r="6" /><circle cx="16" cy="11" r="2" /><path d="M5 1L26 21" stroke="#f2f2f2" stroke-width="5" /><path d="M6 1L27 21" /></g>
                    {:else}<path d="M0 11Q16-10 32 11Q16 32 0 11Z" fill="#999" /><circle cx="16" cy="11" r="5" fill="none" stroke="#f2f2f2" stroke-width="2.500" />{/if}
                  </svg>
                {/if}
                {#if n.root}
                  <span class="rootname"><svg width="28" height="28" viewBox="0 0 28 28"><path d="M1.500 6L7 1.500H26V21L21 26.500H4L1.500 24Z" fill="#c6ccd8" stroke="#333" stroke-width="1.600" /><path d="M3 7L8 2.500H25L21 7Z" fill="#fff" /><path d="M21 7L25 3V21L21 25Z" fill="#9aa0ad" /></svg><span class="bold"><b use:fit={n.w}>{n.text}</b></span></span>
                  <svg class="radio" viewBox="0 0 28 28"><circle cx="14" cy="14" r="12.500" fill="#dfe4ee" stroke="#555" stroke-width="1.500" /><circle cx="14" cy="14" r="9" fill="#c5cad8" /><circle cx="14" cy="14" r="5" fill="#223" /></svg>
                {:else}
                  {#if n.icon === 'gear'}{@render gear()}
                  {:else if n.icon === 'folder'}<svg class="folder" viewBox="0 0 32 26"><path d="M0 0H14L16 2L14 4H0ZM0 6H15L20 1H32V26H0Z" fill="#999" /></svg>
                  {:else}<svg class="cyl" viewBox="0 0 30 30"><path d="M1.500 6Q1.500 1.500 15 1.500Q28.500 1.500 28.500 6V23Q28.500 28 15 28Q1.500 28 1.500 23Z" fill="#e4e4e8" stroke="#555a68" stroke-width="1.700" /><path d="M9 9H17V26H9Z" fill="#fff" opacity=".7" /><ellipse cx="15" cy="6" rx="12" ry="3.500" fill="#fff" /></svg>{/if}
                  <span class="text" class:picked={n.picked} style:margin-left="{n.gap ?? 0}px"><b use:fit={n.w}>{n.text}</b></span>
                {/if}
              </div>
            </li>
          {/each}
        </ul>
      </aside>

      <div class="comments panelhead">
        <span><b use:fit={126}>COMMENTS</b></span>
        <svg class="dot" viewBox="0 0 18 18"><circle cx="9" cy="9" r="9" fill="#333" /><path d="M4.500 9H13.500M9 4.500V13.500" stroke="#fff" stroke-width="2" /></svg>
      </div>

      <div class="navbar">
        <svg class="nav" viewBox="0 0 32 32"><path d="M16 1L22 9H18.500V30H13.500V9H10Z" fill="#eee" stroke="#444b57" stroke-width="1.500" /><ellipse cx="16" cy="18" rx="14" ry="5.500" fill="none" stroke="#444b57" stroke-width="2" /><path d="M4 20L10 17V24Z" fill="#222" /></svg>{@render caret()}
        <svg class="nav" viewBox="0 0 32 32"><path d="M4 10L14 3L18 5L26 3V10" fill="#bbb" stroke="#444b57" stroke-width="2" /><rect x="2" y="10" width="28" height="19" fill="#f4f4f4" stroke="#444b57" stroke-width="2" /><rect x="7" y="14" width="18" height="10" fill="#a8adb5" stroke="#444b57" stroke-width="2" /></svg>
        <svg class="nav" viewBox="0 0 32 32"><path d="M10 29L8 24L1 16Q3 13 8 18L6 6Q8 3 10 6L12 14L12 3Q15 0 16 3L17 14L20 3Q23 2 23 5L22 16L27 8Q31 7 30 10L25 22L24 29Z" fill="#fff" stroke="#444b57" stroke-width="1.600" stroke-linejoin="round" /></svg>
        <svg class="nav" viewBox="0 0 32 32"><circle cx="12" cy="11" r="10" fill="#e9f3f3" stroke="#555" stroke-width="1.600" /><path d="M19 18L29 29" stroke="#444b57" stroke-width="4.500" /><path d="M24 4H31M27.500 0V8M24 11H31" stroke="#444" stroke-width="1.600" /></svg>
        <svg class="nav" viewBox="0 0 32 32"><path d="M1 2H31V31H1Z" fill="none" stroke="#666" stroke-width="1.500" stroke-dasharray="5 3" /><circle cx="13" cy="12" r="10.500" fill="#e9f3f3" stroke="#555" stroke-width="1.800" /><path d="M21 20L30 30" stroke="#444b57" stroke-width="4.500" /></svg>{@render caret()}
        <svg class="nav" viewBox="0 0 32 32"><rect x="1" y="2" width="30" height="23" fill="#e8ebf0" stroke="#555b66" stroke-width="2" /><rect x="4" y="5" width="24" height="17" fill="#93b0dd" stroke="#3e5a90" stroke-width="1.600" /><path d="M13 26H19V29H24V31H8V29H13Z" fill="#777f8c" /></svg>{@render caret()}
        <svg class="nav" viewBox="0 0 32 32"><rect x="2" y="2" width="28" height="28" fill="#f4f5f8" stroke="#555b66" stroke-width="1.600" /><path d="M2 20H30V30H2Z" fill="#aab4cb" /><path d="M6 2V30M10 2V30M14 2V30M18 2V30M22 2V30M26 2V30M2 6H30M2 10H30M2 14H30M2 18H30M2 22H30M2 26H30" stroke="#676d78" /></svg>{@render caret()}
        <svg class="nav" viewBox="0 0 32 32"><g fill="#93afdc" stroke="#3a5080" stroke-width="1.800"><rect x="2" y="4" width="14" height="12" /><rect x="17" y="4" width="14" height="12" /><rect x="2" y="17" width="14" height="12" /><rect x="17" y="17" width="14" height="12" /></g></svg>{@render caret()}
      </div>

      <svg class="assistant" viewBox="0 0 34 34"><path d="M17 .5A16.500 16.500 0 1 0 17 33.500H33.500V17A16.500 16.500 0 0 0 17 .5Z" fill="#000" /><path d="M7 18L19 10M7 22L25 10M12 22L25 14M18 22L25 17.500M23.500 22.500L25 21.500" stroke="#fff" stroke-width="1.700" /></svg>
    </section>

    <footer>
      <div class="playback">
        <svg width="24" height="26" viewBox="0 0 24 26"><path d="M0 1H4V25H0ZM24 1V25L5 13Z" /></svg>
        <svg width="26" height="26" viewBox="0 0 26 26"><path d="M20 1V25L0 13ZM22 9H26V18H22Z" /></svg>
        <svg class="play" width="24" height="30" viewBox="0 0 24 30"><path d="M0 0L24 15L0 30Z" /></svg>
        <svg width="26" height="26" viewBox="0 0 26 26"><path d="M6 1V25L26 13ZM0 9H4V18H0Z" /></svg>
        <svg class="end" width="24" height="26" viewBox="0 0 24 26"><path d="M24 1H20V25H24ZM0 1V25L19 13Z" /></svg>
      </div>
      <div class="track">
        {#each timeline as name}<div class="step">{@render icon(name)}<i></i></div>{/each}
        <svg class="marker" viewBox="0 0 24 64"><path d="M0 0H24V10L14 18V64H10V18L0 10Z" fill="#666" /></svg>
      </div>
      <div class="settings">{@render gear()}</div>
    </footer>
  </main>
</div>

<style>
  :global(body) { background: #0b0420; }
  .screen { width: 2880px; height: 1800px; overflow: hidden; display: flex; flex-direction: column; color: #3c3c3c;
    font-family: "Noto Sans", "Open Sans", sans-serif; font-size: 22px;
    background: linear-gradient(90deg, #44148c 0, #3c12a0 35%, #2c0a9c 75%, #280a8c 100%) 0 0 / 100% 50px no-repeat, linear-gradient(#1c0a50, #08041a); }
  svg { display: block; flex: none; }
  b { display: inline-block; font-weight: inherit; white-space: nowrap; }
  .caret { width: 12px; height: 9px; color: #333; }

  .menubar { height: 49px; display: flex; align-items: center; font-family: Inter, sans-serif; font-size: 25px; font-weight: 500; color: #f1edf9; border-bottom: 1px solid #08031c; padding-left: 40px; }
  .apple { width: 27px; height: 32px; margin-top: -6px; }
  nav { display: flex; padding-left: 40px; margin-top: -4px; }
  .menu { flex: none; }
  .strong { font-weight: 700; }
  .status { display: flex; align-items: center; margin-left: auto; margin-top: -2px; padding-right: 38px; }
  .badge { margin: 0 38px 0 42px; width: 32px; height: 32px; border-radius: 5px; background: #eeeaf8; color: #2b0b92; font-size: 20px; font-weight: 600; display: flex; align-items: center; justify-content: center; letter-spacing: -1px; }
  .wifi { margin-left: 36px; }
  .find { margin-left: 36px; }
  .toggles { margin-left: 35px; }
  .siri { margin-left: 33px; }
  .clock { display: flex; gap: 15px; margin-left: 33px; margin-top: -3px; }

  .window { flex: 1; display: flex; flex-direction: column; border-radius: 20px; overflow: hidden; background: #f2f2f2; }
  .titlebar { height: 56px; background: #f0eef3; border-bottom: 1px solid #a9a9ab; display: flex; align-items: center; }
  .lights { display: flex; gap: 16px; padding-left: 16px; }
  .lights i { width: 24px; height: 24px; border-radius: 50%; box-shadow: inset 0 0 0 1px #0002; }
  .red { background: #ed6a5f; } .amber { background: #f5be4f; } .green { background: #62c554; }
  h1 { margin: -2px 0 0 918px; font: 700 25px Inter, sans-serif; color: #454348; white-space: nowrap; }
  h1 span { display: inline-block; }

  .tabbar { height: 63px; background: #cbcbcb; display: flex; align-items: flex-end; }
  .quick { width: 370px; padding-left: 18px; height: 63px; display: flex; align-items: center; }
  .pair { display: flex; align-items: center; gap: 11px; margin-left: 39px; }
  .down { width: 15px; height: 10px; fill: #666; }
  .save { margin-left: 37px; }
  .undo { margin-left: 39px; }
  .redo { margin-left: 23px; opacity: .55; }
  .tab { height: 56px; border-radius: 8px 8px 0 0; background: #bababa; display: flex; align-items: center; justify-content: center; flex: none; }
  .home { width: 78px; padding: 5px 0 0 6px; box-sizing: border-box; }
  .doc { width: 962px; margin-left: 8px; font-size: 24px; color: #666; position: relative; padding: 3px 24px 0 0; box-sizing: border-box; }
  .cube { width: 28px; height: 32px; margin: 1px 0 0 3px; }
  .name { margin: -1px 0 0 10px; width: 165px; }
  .close { position: absolute; right: 13px; top: 20px; width: 18px; height: 18px; fill: none; stroke: #777; stroke-width: 2.5; }
  .active { background: #f2f2f2; color: #3c3c3c; }
  .active .name { width: 169px; }
  .plus { width: 56px; margin-left: 8px; padding-left: 4px; box-sizing: border-box; }
  .tools { flex: 1; height: 61px; display: flex; align-items: center; padding-left: 24px; font-size: 24px; }
  .jobs { display: flex; align-items: center; gap: 7px; margin-left: 33px; width: 109px; }
  .help { margin-left: 35px; }
  .avatar { margin-left: 37px; width: 51px; height: 51px; border-radius: 50%; background: #ededed; display: flex; align-items: center; justify-content: center; font-size: 25px; letter-spacing: -.5px; }

  .ribbon { height: 163px; border-bottom: 2px solid #cdcdcd; margin-bottom: 5px; display: flex; flex: none; }
  .workspace { margin: 21px 0 0 23px; width: 220px; height: 122px; box-sizing: border-box; border: 2px solid #ccc; border-radius: 9px; display: flex; align-items: center; justify-content: center; gap: 11px; padding: 0 0 4px 2px; }
  .wtext { font-weight: 700; font-size: 21px; }
  .panels { margin-left: 12px; display: flex; flex-direction: column; }
  .rtabs { display: flex; padding-left: 45px; height: 47px; align-items: center; box-sizing: border-box; }
  .rtab { flex: none; padding-bottom: 5px; }
  .on { color: #0696d7; font-weight: 700; position: relative; font-size: 21px; }
  .on::after { content: ""; position: absolute; left: -23px; top: 34px; width: 118px; height: 6px; background: #0696d7; }
  .groups { display: flex; margin-top: 6px; }
  .group { height: 102px; box-sizing: border-box; border-left: 2px solid #ccc; display: flex; flex-direction: column; align-items: center; }
  .group:first-child { border-color: transparent; }
  .icons { display: flex; gap: 22px; height: 64px; margin: 1px 0 0 2px; }
  .group:first-child .icons { margin-left: 0; }
  .icon { width: 64px; height: 64px; overflow: visible; }
  .glabel { display: flex; align-items: center; gap: 7px; margin-top: 9px; line-height: 30px; margin-left: 1px; }
  .tight { margin-left: -6px; }
  .wide { margin-left: 5px; }
  .group:first-child .glabel { margin-left: -11px; }
  .glabel .caret { margin-top: -2px; }

  .banner { height: 64px; flex: none; background: #faa21b; display: flex; align-items: center; color: #fff; }
  .banner p { margin: -2px 0 0 498px; font: 700 26px "Liberation Sans", Arial, sans-serif; white-space: nowrap; }
  .banner p span { display: inline-block; }
  .banner u { text-underline-offset: 3px; }
  .banner svg { margin-left: auto; margin-right: 33px; width: 18px; height: 18px; margin-top: -3px; }

  .canvas { flex: 1; position: relative; overflow: hidden; background: #fff; }
  .scene { position: absolute; inset: 0; width: 2880px; height: 1296px; }
  .facing { font: 700 27px "Noto Sans", sans-serif; fill: #999ca1; }
  .axis { font: 600 28px "Noto Sans", sans-serif; }
  .z { fill: #7a7af8; } .x { fill: #f76464; }
  .browser { position: absolute; left: 8px; top: 8px; width: 599px; }
  .panelhead { height: 49px; box-sizing: border-box; background: #f2f2f2; border: 1px solid #ccc; border-width: 1px 2px 2px 1px; display: flex; align-items: center; padding: 0 20px 0 9px; gap: 20px; color: #666; font-size: 21px; }
  .dot { margin-left: auto; width: 19px; height: 19px; }
  .comments { position: absolute; left: 8px; top: 1238px; width: 599px; padding-left: 49px; border-top-color: transparent; }
  ul { margin: 11px 0 0 -8px; padding: 0; list-style: none; display: flex; flex-direction: column; gap: 8px; }
  li { display: flex; height: 40px; align-items: center; }
  .twist { width: 36px; }
  .shut { margin-left: 1px; }
  .node { height: 40px; background: #f2f2f2; display: flex; align-items: center; box-sizing: border-box; padding-left: 6px; flex: none; }
  .eye { width: 32px; height: 22px; margin-right: 18px; }
  .folder { width: 32px; height: 26px; }
  .gear { width: 32px; height: 32px; }
  .node .gear { width: 28px; height: 28px; margin-left: -1px; }
  .cyl { width: 30px; height: 30px; margin: -2px 0 0 1px; }
  .text { height: 40px; line-height: 39px; }
  .picked { background: #808080; color: #fff; width: 98px; margin-left: auto !important; text-align: center; }
  .rootname { margin-left: -6px; width: 244px; height: 32px; background: #999; display: flex; align-items: center; padding-left: 9px; box-sizing: border-box; gap: 29px; color: #fff; font-weight: 700; }
  .bold { font-size: 21.500px; margin-top: -2px; }
  .radio { width: 28px; height: 28px; margin-left: 8px; }

  .navbar { position: absolute; left: 1204px; top: 1236px; width: 474px; height: 48px; background: #f2f2f2; display: flex; align-items: center; padding-left: 7px; box-sizing: border-box; }
  .nav { width: 32px; height: 32px; margin-right: 9px; }
  .navbar .caret { margin-right: 12px; height: 8px; width: 12px; }
  .navbar .nav:nth-child(4), .navbar .nav:nth-child(3), .navbar .nav:nth-child(5) { margin-right: 20px; }
  .navbar .nav:nth-child(8), .navbar .nav:nth-child(12) { margin-right: 4px; }
  .navbar .nav:nth-child(10) { margin-right: 5px; margin-left: 1px; }
  .navbar .nav:nth-child(6) { margin-right: 10px; }
  .assistant { position: absolute; left: 2822px; top: 1252px; width: 34px; height: 34px; }

  footer { height: 100px; box-sizing: border-box; border-top: 4px solid #cbcbcb; background: linear-gradient(90deg, #cbcbcb 270px, #dedede 270px, #dedede 2790px, #cbcbcb 2790px) 0 0 / 100% 2px no-repeat #f2f2f2; display: flex; align-items: flex-start; flex: none; }
  .playback { width: 271px; height: 30px; display: flex; align-items: center; gap: 24px; padding: 34px 0 0 21px; fill: #666; }
  .play { margin: 1px 0 0 2px; }
  .end { margin-left: 2px; }
  .track { display: flex; gap: 16px; margin-top: 32px; position: relative; }
  .step { width: 32px; height: 52px; display: flex; flex-direction: column; align-items: center; position: relative; }
  .step .icon { width: 32px; height: 32px; }
  .step i { width: 4px; height: 10px; background: #cbcbcb; margin-top: 6px; }
  .step::after { content: ""; position: absolute; left: 16px; bottom: 0; width: 48px; height: 4px; background: #cbcbcb; }
  .step:nth-last-child(2)::after { width: 2px; }
  .marker { position: absolute; left: 1564px; top: -12px; width: 24px; height: 64px; }
  .settings { margin: 33px 27px 0 auto; }
</style>
